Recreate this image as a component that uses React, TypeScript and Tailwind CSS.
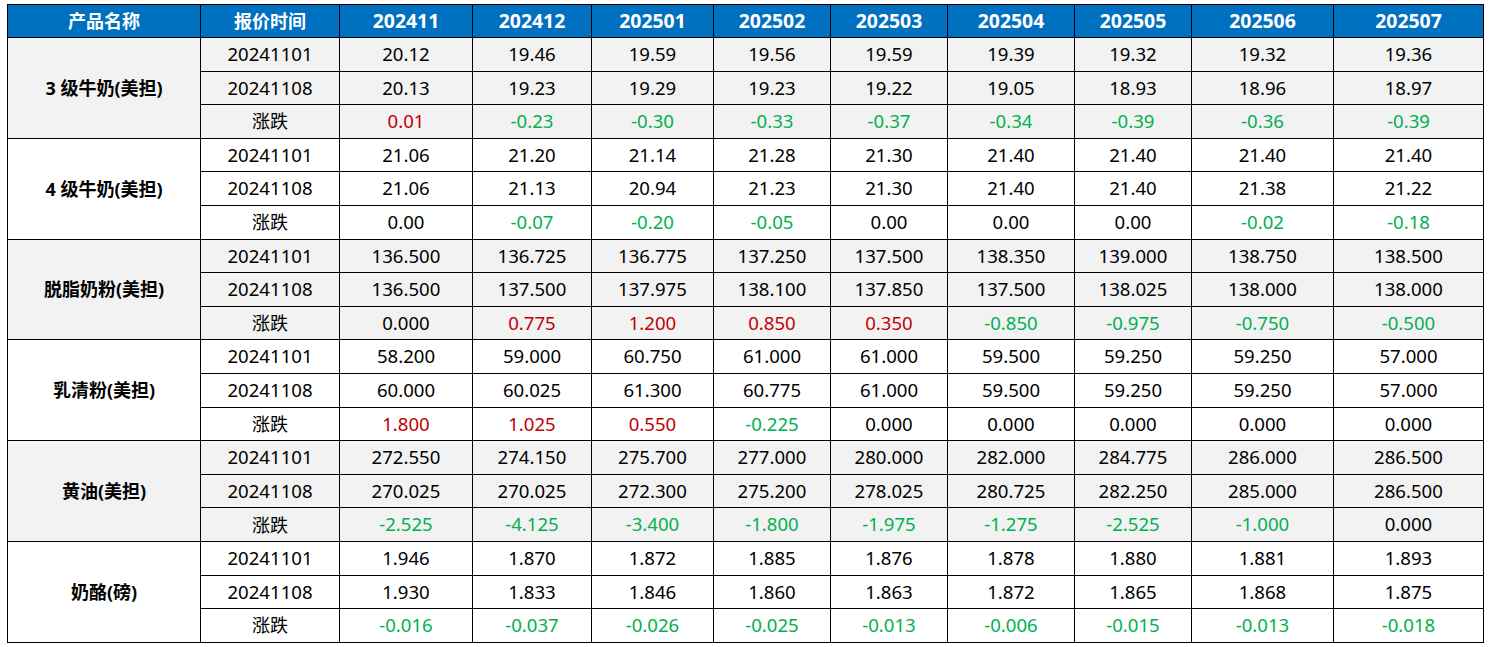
const months = ['202411', '202412', '202501', '202502', '202503', '202504', '202505', '202506', '202507'];
const colWidths = [193, 139, 133, 119, 122, 117, 117, 127, 117, 142, 150];

type Group = { name: string; a: string[]; b: string[]; d: string[] };

const groups: Group[] = [
  {
    name: '3 级牛奶(美担)',
    a: ['20.12', '19.46', '19.59', '19.56', '19.59', '19.39', '19.32', '19.32', '19.36'],
    b: ['20.13', '19.23', '19.29', '19.23', '19.22', '19.05', '18.93', '18.96', '18.97'],
    d: ['0.01', '-0.23', '-0.30', '-0.33', '-0.37', '-0.34', '-0.39', '-0.36', '-0.39'],
  },
  {
    name: '4 级牛奶(美担)',
    a: ['21.06', '21.20', '21.14', '21.28', '21.30', '21.40', '21.40', '21.40', '21.40'],
    b: ['21.06', '21.13', '20.94', '21.23', '21.30', '21.40', '21.40', '21.38', '21.22'],
    d: ['0.00', '-0.07', '-0.20', '-0.05', '0.00', '0.00', '0.00', '-0.02', '-0.18'],
  },
  {
    name: '脱脂奶粉(美担)',
    a: ['136.500', '136.725', '136.775', '137.250', '137.500', '138.350', '139.000', '138.750', '138.500'],
    b: ['136.500', '137.500', '137.975', '138.100', '137.850', '137.500', '138.025', '138.000', '138.000'],
    d: ['0.000', '0.775', '1.200', '0.850', '0.350', '-0.850', '-0.975', '-0.750', '-0.500'],
  },
  {
    name: '乳清粉(美担)',
    a: ['58.200', '59.000', '60.750', '61.000', '61.000', '59.500', '59.250', '59.250', '57.000'],
    b: ['60.000', '60.025', '61.300', '60.775', '61.000', '59.500', '59.250', '59.250', '57.000'],
    d: ['1.800', '1.025', '0.550', '-0.225', '0.000', '0.000', '0.000', '0.000', '0.000'],
  },
  {
    name: '黄油(美担)',
    a: ['272.550', '274.150', '275.700', '277.000', '280.000', '282.000', '284.775', '286.000', '286.500'],
    b: ['270.025', '270.025', '272.300', '275.200', '278.025', '280.725', '282.250', '285.000', '286.500'],
    d: ['-2.525', '-4.125', '-3.400', '-1.800', '-1.975', '-1.275', '-2.525', '-1.000', '0.000'],
  },
  {
    name: '奶酪(磅)',
    a: ['1.946', '1.870', '1.872', '1.885', '1.876', '1.878', '1.880', '1.881', '1.893'],
    b: ['1.930', '1.833', '1.846', '1.860', '1.863', '1.872', '1.865', '1.868', '1.875'],
    d: ['-0.016', '-0.037', '-0.026', '-0.025', '-0.013', '-0.006', '-0.015', '-0.013', '-0.018'],
  },
];

function deltaColor(v: string) {
  const n = parseFloat(v);
  if (n > 0) return 'text-[#c00000]';
  if (n < 0) return 'text-[#00b050]';
  return 'text-black';
}

const cell = 'border border-black text-center p-0 leading-none';

export default function App() {
  return (
    <div
      className="bg-white w-[1491px] h-[647px] pt-[4px] pl-[7px]"
      style={{ fontFamily: '"Noto Sans", "Noto Sans CJK SC", sans-serif' }}
    >
      <table className="border-collapse table-fixed text-[18.6px] text-black" style={{ width: 1476 }}>
        <colgroup>
          {colWidths.map((w, i) => (
            <col key={i} style={{ width: w }} />
          ))}
        </colgroup>
        <thead>
          <tr className="h-[33px] bg-[#0070c0] text-white font-bold">
            <th className={`${cell} text-[18px]`}>产品名称</th>
            <th className={`${cell} text-[18px]`}>报价时间</th>
            {months.map((m) => (
              <th key={m} className={`${cell} text-[19.4px]`}>
                {m}
              </th>
            ))}
          </tr>
        </thead>
        <tbody>
          {groups.map((g, gi) => {
            const bg = gi % 2 === 0 ? 'bg-[#f2f2f2]' : 'bg-white';
            return [
              <tr key={g.name + 'a'} className={`h-[33.6px] ${bg}`}>
                <td rowSpan={3} className={`${cell} font-bold text-[18px]`}>
                  {g.name}
                </td>
                <td className={cell}>20241101</td>
                {g.a.map((v, i) => (
                  <td key={i} className={cell}>
                    {v}
                  </td>
                ))}
              </tr>,
              <tr key={g.name + 'b'} className={`h-[33.6px] ${bg}`}>
                <td className={cell}>20241108</td>
                {g.b.map((v, i) => (
                  <td key={i} className={cell}>
                    {v}
                  </td>
                ))}
              </tr>,
              <tr key={g.name + 'd'} className={`h-[33.6px] ${bg}`}>
                <td className={`${cell} text-[18px]`}>涨跌</td>
                {g.d.map((v, i) => (
                  <td key={i} className={`${cell} ${deltaColor(v)}`}>
                    {v}
                  </td>
                ))}
              </tr>,
            ];
          })}
        </tbody>
      </table>
    </div>
  );
}
